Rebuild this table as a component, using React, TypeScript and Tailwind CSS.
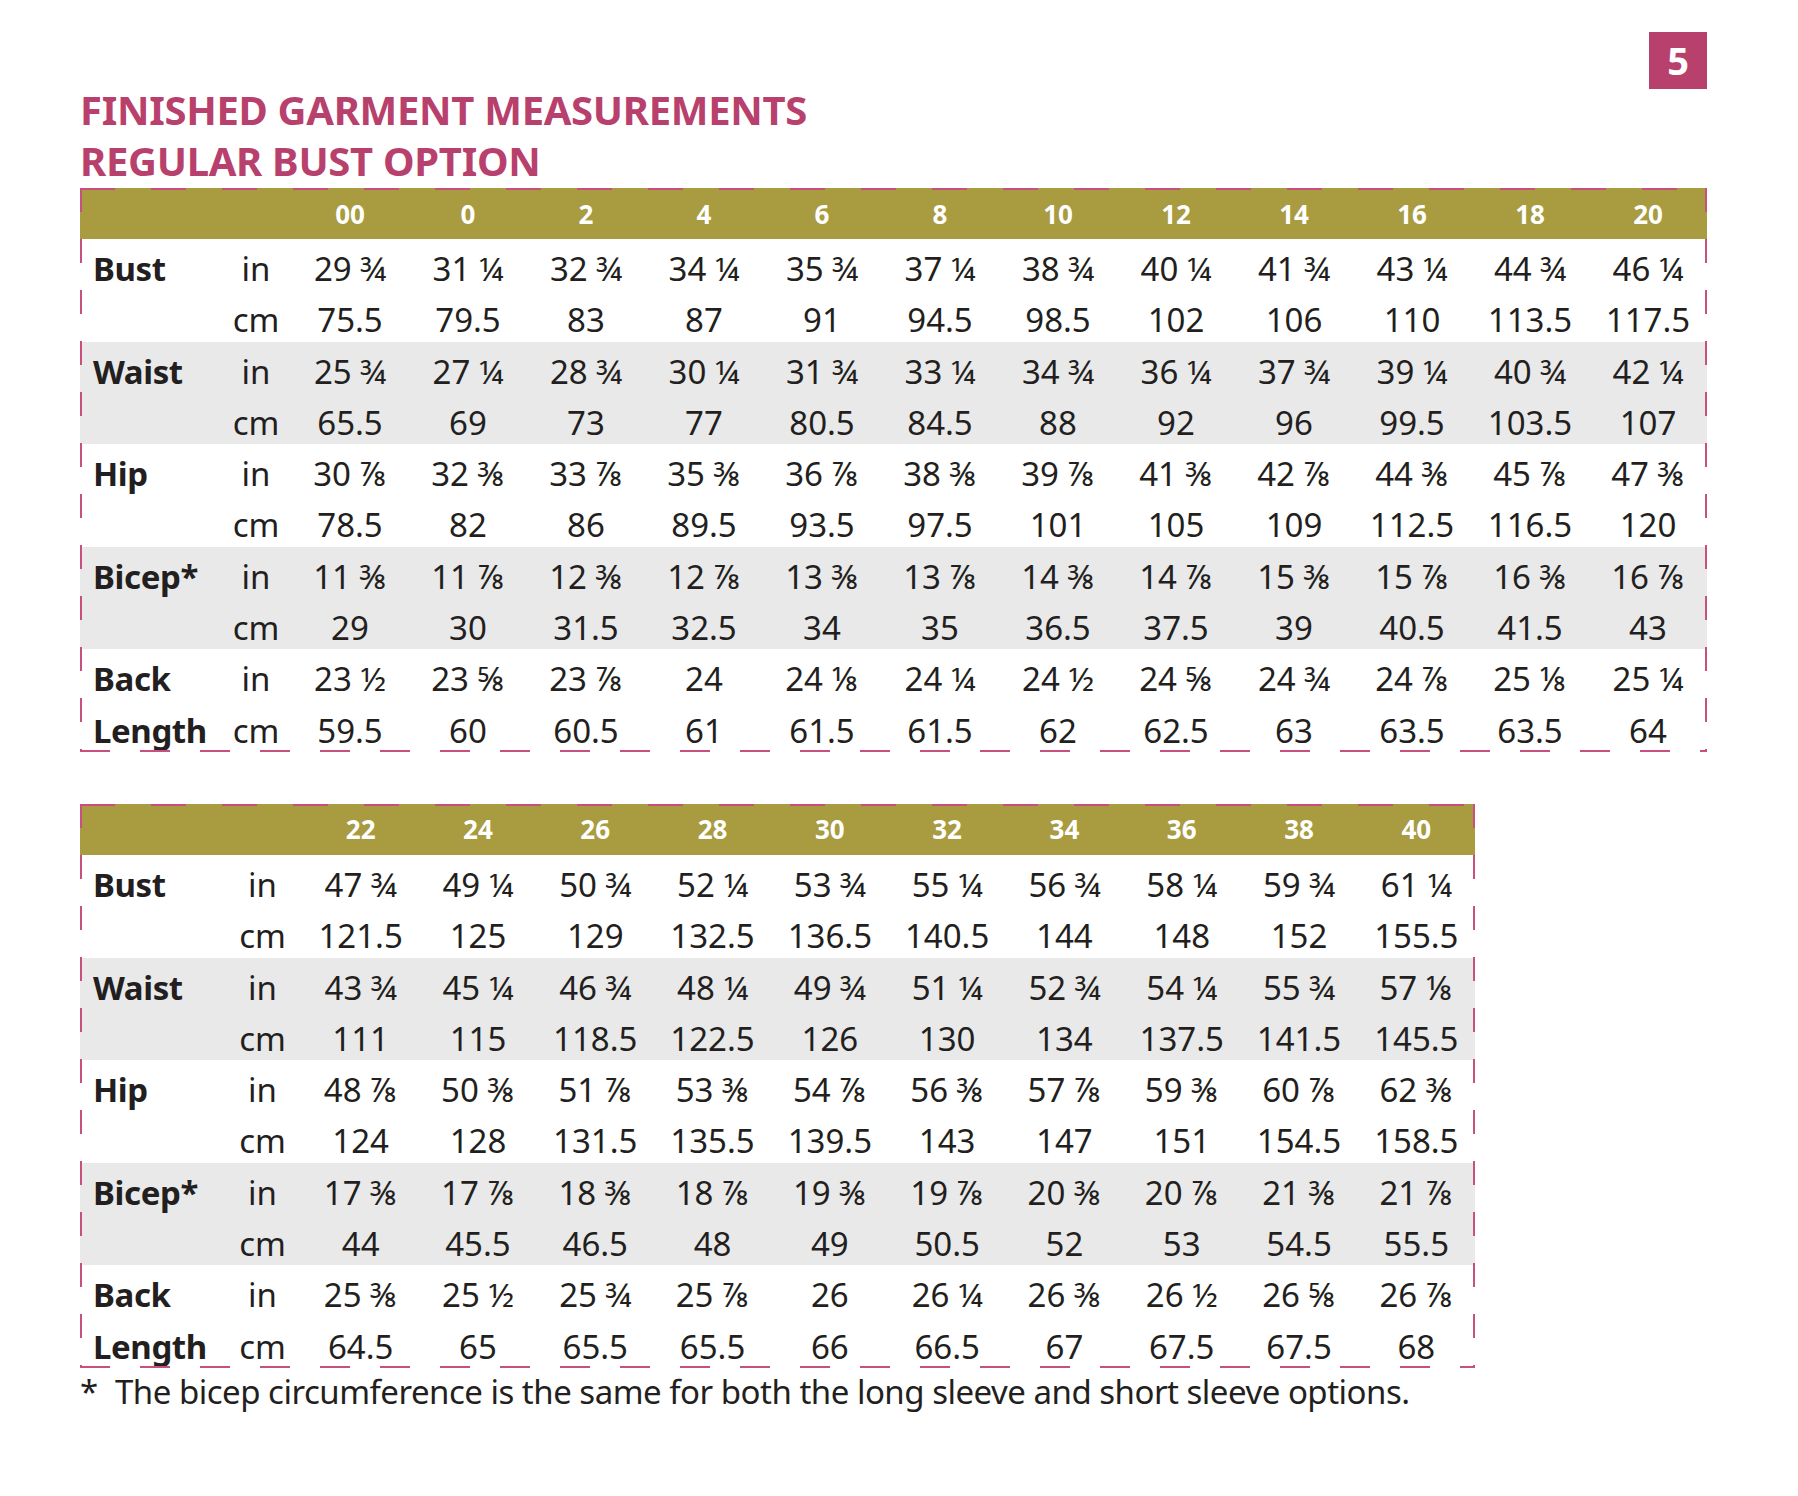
import React from "react";

type Group = {
  label: string;
  label2?: string;
  inches: string[];
  cms: string[];
  shaded?: boolean;
};

const TABLE_ONE_SIZES = ["00", "0", "2", "4", "6", "8", "10", "12", "14", "16", "18", "20"];

const TABLE_ONE: Group[] = [
  {
    label: "Bust",
    inches: ["29 ¾", "31 ¼", "32 ¾", "34 ¼", "35 ¾", "37 ¼", "38 ¾", "40 ¼", "41 ¾", "43 ¼", "44 ¾", "46 ¼"],
    cms: ["75.5", "79.5", "83", "87", "91", "94.5", "98.5", "102", "106", "110", "113.5", "117.5"],
  },
  {
    label: "Waist",
    shaded: true,
    inches: ["25 ¾", "27 ¼", "28 ¾", "30 ¼", "31 ¾", "33 ¼", "34 ¾", "36 ¼", "37 ¾", "39 ¼", "40 ¾", "42 ¼"],
    cms: ["65.5", "69", "73", "77", "80.5", "84.5", "88", "92", "96", "99.5", "103.5", "107"],
  },
  {
    label: "Hip",
    inches: ["30 ⅞", "32 ⅜", "33 ⅞", "35 ⅜", "36 ⅞", "38 ⅜", "39 ⅞", "41 ⅜", "42 ⅞", "44 ⅜", "45 ⅞", "47 ⅜"],
    cms: ["78.5", "82", "86", "89.5", "93.5", "97.5", "101", "105", "109", "112.5", "116.5", "120"],
  },
  {
    label: "Bicep*",
    shaded: true,
    inches: ["11 ⅜", "11 ⅞", "12 ⅜", "12 ⅞", "13 ⅜", "13 ⅞", "14 ⅜", "14 ⅞", "15 ⅜", "15 ⅞", "16 ⅜", "16 ⅞"],
    cms: ["29", "30", "31.5", "32.5", "34", "35", "36.5", "37.5", "39", "40.5", "41.5", "43"],
  },
  {
    label: "Back",
    label2: "Length",
    inches: ["23 ½", "23 ⅝", "23 ⅞", "24", "24 ⅛", "24 ¼", "24 ½", "24 ⅝", "24 ¾", "24 ⅞", "25 ⅛", "25 ¼"],
    cms: ["59.5", "60", "60.5", "61", "61.5", "61.5", "62", "62.5", "63", "63.5", "63.5", "64"],
  },
];

const TABLE_TWO_SIZES = ["22", "24", "26", "28", "30", "32", "34", "36", "38", "40"];

const TABLE_TWO: Group[] = [
  {
    label: "Bust",
    inches: ["47 ¾", "49 ¼", "50 ¾", "52 ¼", "53 ¾", "55 ¼", "56 ¾", "58 ¼", "59 ¾", "61 ¼"],
    cms: ["121.5", "125", "129", "132.5", "136.5", "140.5", "144", "148", "152", "155.5"],
  },
  {
    label: "Waist",
    shaded: true,
    inches: ["43 ¾", "45 ¼", "46 ¾", "48 ¼", "49 ¾", "51 ¼", "52 ¾", "54 ¼", "55 ¾", "57 ⅛"],
    cms: ["111", "115", "118.5", "122.5", "126", "130", "134", "137.5", "141.5", "145.5"],
  },
  {
    label: "Hip",
    inches: ["48 ⅞", "50 ⅜", "51 ⅞", "53 ⅜", "54 ⅞", "56 ⅜", "57 ⅞", "59 ⅜", "60 ⅞", "62 ⅜"],
    cms: ["124", "128", "131.5", "135.5", "139.5", "143", "147", "151", "154.5", "158.5"],
  },
  {
    label: "Bicep*",
    shaded: true,
    inches: ["17 ⅜", "17 ⅞", "18 ⅜", "18 ⅞", "19 ⅜", "19 ⅞", "20 ⅜", "20 ⅞", "21 ⅜", "21 ⅞"],
    cms: ["44", "45.5", "46.5", "48", "49", "50.5", "52", "53", "54.5", "55.5"],
  },
  {
    label: "Back",
    label2: "Length",
    inches: ["25 ⅜", "25 ½", "25 ¾", "25 ⅞", "26", "26 ¼", "26 ⅜", "26 ½", "26 ⅝", "26 ⅞"],
    cms: ["64.5", "65", "65.5", "65.5", "66", "66.5", "67", "67.5", "67.5", "68"],
  },
];

// dashed pink frame drawn over the table edges
const DashedFrame = () => (
  <>
    <div className="pointer-events-none absolute left-0 right-0 top-0 h-[2px] bg-[repeating-linear-gradient(90deg,#c8507e_0_35px,transparent_35px_71px)]" />
    <div className="pointer-events-none absolute bottom-0 left-0 right-0 h-[2px] bg-[repeating-linear-gradient(90deg,#c8507e_0_30px,transparent_30px_60px)]" />
    <div className="pointer-events-none absolute bottom-0 left-0 top-0 w-[2px] bg-[repeating-linear-gradient(180deg,#c8507e_0_24px,transparent_24px_51px)]" />
    <div className="pointer-events-none absolute bottom-0 right-0 top-0 w-[2px] bg-[repeating-linear-gradient(180deg,#c8507e_0_24px,transparent_24px_51px)]" />
  </>
);

interface TableProps {
  sizes: string[];
  groups: Group[];
  gridCols: string;
  width: string;
}

const SizeTable: React.FC<TableProps> = ({ sizes, groups, gridCols, width }) => {
  const cell = "flex items-center justify-center pt-[5px] whitespace-nowrap";
  return (
    <div className={`relative ${width}`}>
      <div className={`grid ${gridCols} h-[51px] bg-[#a99b40] text-[26px] font-bold text-white`}>
        <div />
        <div />
        {sizes.map((s) => (
          <div key={s} className="flex items-center justify-center pt-[1px]">
            {s}
          </div>
        ))}
      </div>
      {groups.map((g) => (
        <div key={g.label} className={g.shaded ? "bg-[#e9e9e9]" : ""}>
          <div className={`grid ${gridCols} h-[51.3px] text-[33px]`}>
            <div className="flex items-center pl-[13px] pt-[5px] font-bold tracking-[-0.4px]">{g.label}</div>
            <div className={cell}>in</div>
            {g.inches.map((v, i) => (
              <div key={i} className={cell}>
                {v}
              </div>
            ))}
          </div>
          <div className={`grid ${gridCols} h-[51.3px] text-[33px]`}>
            <div className="flex items-center pl-[13px] pt-[5px] font-bold tracking-[-0.4px]">{g.label2 ?? ""}</div>
            <div className={cell}>cm</div>
            {g.cms.map((v, i) => (
              <div key={i} className={cell}>
                {v}
              </div>
            ))}
          </div>
        </div>
      ))}
      <DashedFrame />
    </div>
  );
};

export default function App() {
  return (
    <div className="min-h-[1496px] w-[1798px] bg-white pl-[80px] pt-[32px] font-['Noto_Sans','Open_Sans',sans-serif] text-[#231f20]">
      <div className="flex w-[1627px] items-start justify-between">
        <div className="mt-[52px] text-[40px] font-bold leading-[51px] tracking-[-0.3px] text-[#b8406d]">
          <div>FINISHED GARMENT MEASUREMENTS</div>
          <div>REGULAR BUST OPTION</div>
        </div>
        <div className="flex h-[57px] w-[58px] items-center justify-center bg-[#b8406d] text-[38px] font-bold text-white">
          5
        </div>
      </div>

      <div className="mt-[2px]">
        <SizeTable
          sizes={TABLE_ONE_SIZES}
          groups={TABLE_ONE}
          gridCols="grid-cols-[141px_70px_repeat(12,118px)]"
          width="w-[1627px]"
        />
      </div>

      <div className="mt-[52px]">
        <SizeTable
          sizes={TABLE_TWO_SIZES}
          groups={TABLE_TWO}
          gridCols="grid-cols-[143px_79px_repeat(10,117.3px)]"
          width="w-[1395px]"
        />
      </div>

      <div className="mt-[2px] flex text-[33px] leading-[44px]">
        <span className="w-[35px]">*</span>
        <span className="tracking-[-0.5px]">
          The bicep circumference is the same for both the long sleeve and short sleeve options.
        </span>
      </div>
    </div>
  );
}
